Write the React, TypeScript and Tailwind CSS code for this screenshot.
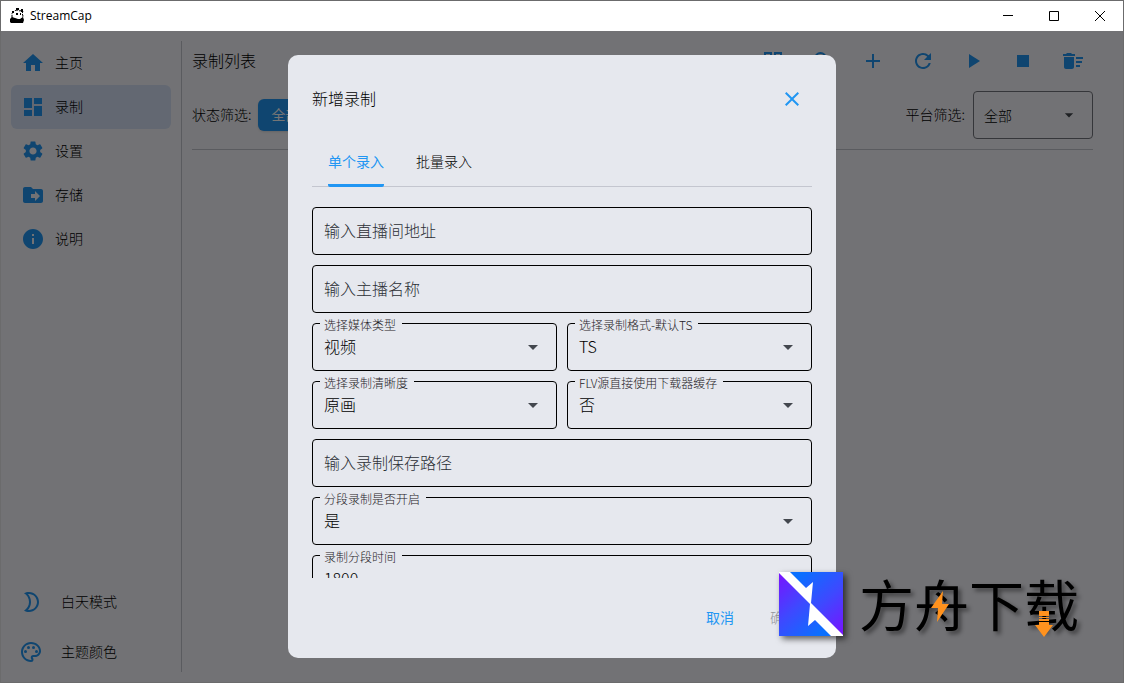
import React, { useState } from 'react';
import {
    MdAdd,
    MdArrowDropDown,
    MdClose,
    MdDashboard,
    MdDeleteSweep,
    MdDriveFileMove,
    MdGridView,
    MdHome,
    MdInfo,
    MdOutlineColorLens,
    MdPlayArrow,
    MdRefresh,
    MdSearch,
    MdSettings,
    MdStop,
} from 'react-icons/md';

const navItems = [
    { label: '主页', Icon: MdHome },
    { label: '录制', Icon: MdDashboard },
    { label: '设置', Icon: MdSettings },
    { label: '存储', Icon: MdDriveFileMove },
    { label: '说明', Icon: MdInfo },
];

const toolbar = [
    { label: '视图', Icon: MdGridView },
    { label: '搜索', Icon: MdSearch },
    { label: '添加', Icon: MdAdd },
    { label: '刷新', Icon: MdRefresh },
    { label: '开始', Icon: MdPlayArrow },
    { label: '停止', Icon: MdStop },
    { label: '清空', Icon: MdDeleteSweep },
];

const TitleBar: React.FC = () => (
    <header className="flex h-[30px] shrink-0 items-center bg-white pl-2">
        <svg className="h-4 w-4" viewBox="0 0 16 16">
            <path d="M3 5 5 3l3-1 3 1 2-1 1 2-1 1 1 3-1 3-3 1-4-1-3-1z" fill="#fff" stroke="#000" strokeWidth="1" strokeDasharray="3 1" />
            <path d="M7 0h3v2H7zM12 1h2v3h-2zM3 3h2v2H3zM7 5h2v2H7zM11 5h1v2h-1z" fill="#000" />
            <path d="M1 11l2-2 3 1 3 1h2l3-2 1 3-1 3H2l-1-1z" fill="#000" />
        </svg>
        <h1 className="ml-1 flex-1 pl-px font-['Open_Sans','Noto_Sans',sans-serif] text-xs font-normal text-black">StreamCap</h1>
        <button aria-label="最小化" className="flex h-full w-[46px] items-center justify-center">
            <svg className="h-3 w-3" viewBox="0 0 12 12" shapeRendering="crispEdges"><path d="M1 5h10v1H1z" /></svg>
        </button>
        <button aria-label="最大化" className="flex h-full w-[46px] items-center justify-center">
            <svg className="h-3 w-3" viewBox="0 0 12 12"><path d="M1.5 1.5h9v9h-9z" fill="none" stroke="#000" /></svg>
        </button>
        <button aria-label="关闭窗口" className="flex h-full w-[46px] items-center justify-center">
            <svg className="h-3 w-3" viewBox="0 0 12 12"><path d="M1 1l10 10M11 1 1 11" fill="none" stroke="#000" /></svg>
        </button>
    </header>
);

const Sidebar: React.FC = () => (
    <aside className="flex w-[171px] shrink-0 flex-col border-r border-[#c4c6cf] pr-2.5">
        <nav className="flex-1">
            {navItems.map(({ label, Icon }) => (
                <a
                    key={label}
                    href="#"
                    className={`flex h-11 items-center gap-2.5 rounded-md pl-2.5 text-sm ${label === '录制' ? 'bg-[#d7e3f9]' : ''}`}
                >
                    <Icon className="h-6 w-6 text-[#2196f3]" />
                    <span className="pb-0.5">{label}</span>
                </a>
            ))}
        </nav>
        <button className="flex h-10 items-center gap-[18px] pl-2 text-sm">
            <svg className="h-6 w-6 text-[#2196f3]" viewBox="0 0 24 24" fill="currentColor">
                <path d="M10 4c4.41 0 8 3.59 8 8s-3.59 8-8 8c-.34 0-.68-.02-1.01-.07C10.9 17.74 12 14.94 12 12S10.9 6.26 8.99 4.07C9.32 4.02 9.66 4 10 4m0-2c-1.82 0-3.53.5-5 1.35 2.99 1.73 5 4.95 5 8.65s-2.01 6.92-5 8.65c1.47.85 3.18 1.35 5 1.35 5.52 0 10-4.48 10-10S15.52 2 10 2z" />
            </svg>
            <span className="pb-0.5">白天模式</span>
        </button>
        <button className="mt-2.5 flex h-10 items-center gap-[18px] pl-2 text-sm">
            <MdOutlineColorLens className="h-6 w-6 text-[#2196f3]" />
            <span className="pb-0.5">主题颜色</span>
        </button>
    </aside>
);

const RecordList: React.FC = () => (
    <main className="flex min-w-0 flex-1 flex-col pr-5 pl-2.5">
        <div className="flex h-10 items-center gap-2.5">
            <h2 className="flex-1 pb-0.5 text-base font-light">录制列表</h2>
            {toolbar.map(({ label, Icon }) => (
                <button key={label} aria-label={label} className="flex h-10 w-10 items-center justify-center text-[#2196f3]">
                    <Icon className="h-6 w-6" />
                </button>
            ))}
        </div>
        <div className="mt-2.5 flex items-center border-b border-[#c4c6cf] pb-2.5 text-sm">
            <span className="pb-0.5">状态筛选:</span>
            <button className="ml-1.5 h-8 rounded-md bg-[#2196f3] px-3.5 pb-0.5 font-normal text-white shadow-sm">全部</button>
            <label htmlFor="platform" className="mr-2 ml-auto pb-0.5">平台筛选:</label>
            <div className="relative w-[120px]">
                <select id="platform" className="block h-12 w-full appearance-none rounded border border-[#74777f] px-2.5">
                    <option>全部</option>
                </select>
                <MdArrowDropDown className="pointer-events-none absolute top-3.5 right-3.5 h-5 w-5 text-[#43474e]" />
            </div>
        </div>
    </main>
);

const TextField: React.FC<{ id: string; placeholder: string }> = ({ id, placeholder }) => (
    <input
        id={id}
        aria-label={placeholder}
        placeholder={placeholder}
        className="h-12 w-full shrink-0 rounded border border-black px-[11px] pb-0.5 text-base placeholder:text-[#2c2f35]"
    />
);

// Label sits in a notch of the top border
const FieldLabel: React.FC<{ id: string; text: string }> = ({ id, text }) => (
    <label htmlFor={id} className="absolute -top-1.5 left-2 bg-[#e6e8ee] pr-1.5 pl-1 text-xs leading-4 text-[#1e2126]">
        {text}
    </label>
);

const SelectField: React.FC<{ id: string; label: string; value: string }> = ({ id, label, value }) => (
    <div className="relative flex-1">
        <select id={id} className="block h-12 w-full appearance-none rounded border border-black px-[11px] pb-0.5 text-base">
            <option>{value}</option>
        </select>
        <FieldLabel id={id} text={label} />
        <MdArrowDropDown className="pointer-events-none absolute top-3 right-3 h-6 w-6 text-[#43474e]" />
    </div>
);

const AddDialog: React.FC = () => {
    const [segment, setSegment] = useState('1800');

    return (
        <div role="dialog" aria-label="新增录制" className="flex h-full w-[548px] flex-col rounded-[10px] bg-[#e6e8ee] px-6 pt-6">
            <div className="flex h-10 shrink-0 items-center justify-between">
                <h2 className="pb-0.5 text-base font-light">新增录制</h2>
                <button aria-label="关闭" className="flex h-10 w-10 items-center justify-center text-[#2196f3]">
                    <MdClose className="h-6 w-6" />
                </button>
            </div>
            <div role="tablist" className="mt-5 flex h-12 shrink-0 border-b border-[#c4c6cf] px-4 text-sm">
                <button role="tab" aria-selected="true" className="-mb-px mr-8 rounded-b-xs border-b-3 border-[#2196f3] pb-0.5 font-normal text-[#2196f3]">
                    单个录入
                </button>
                <button role="tab" aria-selected="false" className="-mb-px border-b-3 border-transparent pb-0.5">
                    批量录入
                </button>
            </div>
            <div className="min-h-0 flex-1 overflow-hidden">
                <div className="flex flex-col gap-2.5 pt-5">
                    <TextField id="url" placeholder="输入直播间地址" />
                    <TextField id="anchor" placeholder="输入主播名称" />
                    <div className="flex gap-2.5">
                        <SelectField id="media" label="选择媒体类型" value="视频" />
                        <SelectField id="format" label="选择录制格式-默认TS" value="TS" />
                    </div>
                    <div className="flex gap-2.5">
                        <SelectField id="quality" label="选择录制清晰度" value="原画" />
                        <SelectField id="flv" label="FLV源直接使用下载器缓存" value="否" />
                    </div>
                    <TextField id="path" placeholder="输入录制保存路径" />
                    <div className="flex">
                        <SelectField id="segmented" label="分段录制是否开启" value="是" />
                    </div>
                    <div className="relative">
                        <input
                            id="segment"
                            value={segment}
                            onChange={(e) => setSegment(e.target.value)}
                            className="h-12 w-full rounded border border-black px-[11px] pb-0.5 text-base"
                        />
                        <FieldLabel id="segment" text="录制分段时间" />
                    </div>
                </div>
            </div>
            <div className="flex h-20 shrink-0 items-center justify-end gap-2 text-sm">
                <button className="h-10 px-3.5 pb-0.5 font-normal text-[#2196f3]">取消</button>
                <button disabled className="h-10 px-3.5 pb-0.5 text-[#94969b]">确定</button>
            </div>
        </div>
    );
};

const Watermark: React.FC = () => (
    <div className="pointer-events-none absolute right-11 bottom-[46px] flex items-start gap-4">
        <svg className="h-16 w-16 drop-shadow-[3px_3px_3px_rgba(0,0,0,0.6)]" viewBox="0 0 64 64">
            <defs>
                <linearGradient id="upper" x1="1" y1="1" x2="0.25" y2="0">
                    <stop offset="0" stopColor="#7a12ff" />
                    <stop offset="0.5" stopColor="#3f48ff" />
                    <stop offset="1" stopColor="#0a70ff" />
                </linearGradient>
                <linearGradient id="lower" x1="0" y1="0" x2="0.75" y2="1">
                    <stop offset="0" stopColor="#7a12ff" />
                    <stop offset="0.5" stopColor="#3f48ff" />
                    <stop offset="1" stopColor="#0a70ff" />
                </linearGradient>
            </defs>
            <path d="M0 0h64v64H0z" fill="#fff" />
            <path d="M11 0h53v63L32 31l2-21-7 6z" fill="url(#upper)" />
            <path d="M0 1l31 31-2 22 7-6 16 16H0z" fill="url(#lower)" />
        </svg>
        <div className="relative">
            <span className="block text-[55px] leading-[60px] font-normal text-black [text-shadow:3px_3px_4px_rgba(0,0,0,0.45)]">方舟下载</span>
            <svg className="absolute top-[19px] left-[72px] h-8 w-[18px]" viewBox="0 0 18 32">
                <path d="M12 0 0 17h7L6 31l12-18h-7z" fill="#ff921e" />
            </svg>
            <svg className="absolute top-[38px] left-[176px] h-[27px] w-[18px]" viewBox="0 0 18 27">
                <path d="M4 1h10v5H4zM4 7h10v1H4zM4 9h10v2H4zM4 12h10v3h4L9 27 0 15h4z" fill="#ff921e" />
            </svg>
        </div>
    </div>
);

const App: React.FC = () => {
    return (
        <div className="relative flex h-screen flex-col overflow-hidden border border-[#6b6b6c] font-['Noto_Sans_CJK_SC',sans-serif] font-light text-black">
            <TitleBar />
            <div className="relative flex min-h-0 flex-1 bg-[#f9f9fe] p-2.5">
                <Sidebar />
                <RecordList />
                {/* Modal backdrop */}
                <div className="absolute inset-0 flex justify-center bg-black/54 py-6">
                    <AddDialog />
                </div>
            </div>
            <Watermark />
        </div>
    );
};

export default App;
